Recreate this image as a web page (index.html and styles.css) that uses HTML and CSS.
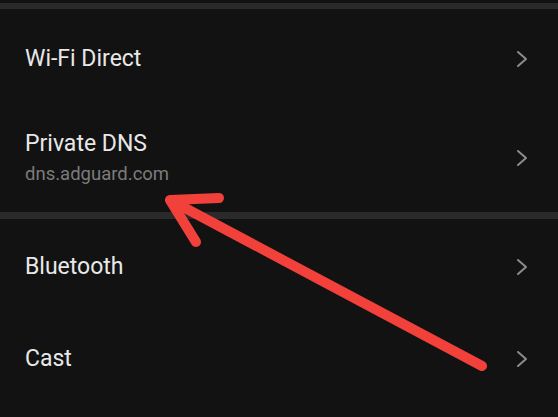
FILE: index.html
```html
<!DOCTYPE html>
<html>
<head>
<meta charset="utf-8">
<link rel="stylesheet" href="styles.css">
</head>
<body>
<div class="screen">
  <div class="top-gap"></div>
  <div class="divider"></div>
  <div class="row row-wifi">
    <div class="texts"><div class="title">Wi-Fi Direct</div></div>
    <svg class="chev" viewBox="0 0 12 18"><path d="M2 2 L10 9 L2 16"/></svg>
  </div>
  <div class="row row-double">
    <div class="texts">
      <div class="title">Private DNS</div>
      <div class="sub">dns.adguard.com</div>
    </div>
    <svg class="chev" viewBox="0 0 12 18"><path d="M2 2 L10 9 L2 16"/></svg>
  </div>
  <div class="divider divider-2"></div>
  <div class="row row-bt">
    <div class="texts"><div class="title">Bluetooth</div></div>
    <svg class="chev" viewBox="0 0 12 18"><path d="M2 2 L10 9 L2 16"/></svg>
  </div>
  <div class="row row-cast">
    <div class="texts"><div class="title">Cast</div></div>
    <svg class="chev" viewBox="0 0 12 18"><path d="M2 2 L10 9 L2 16"/></svg>
  </div>
  <svg class="arrow" viewBox="0 0 558 417">
    <path d="M482 366 L170 200 M170 200 L219 198 M170 200 L196 242"/>
  </svg>
</div>
</body>
</html>
```
FILE: styles.css
```css
* { box-sizing: border-box; margin: 0; padding: 0; }
html, body { width: 558px; height: 417px; overflow: hidden; background: #121212; }
body { font-family: Roboto, "Noto Sans", sans-serif; }
.screen { position: relative; width: 558px; height: 417px; background: #121212; }
.top-gap { height: 3px; }
.divider { height: 6px; background: #2a2a2a; }
.divider-2 { height: 7px; }
.row { display: flex; align-items: center; justify-content: space-between; padding: 0 30px 0 25px; }
.row-wifi { height: 99px; }
.row-double { height: 104px; padding-bottom: 4px; }
.row-bt { height: 96px; }
.row-cast { height: 88px; }
.title { color: #e8e8e8; font-size: 23px; line-height: 26px; }
.sub { color: #7c7c7c; font-size: 18.5px; line-height: 22px; margin-top: 6px; }
.chev { width: 12px; height: 18px; fill: none; stroke: #8c8c8c; stroke-width: 2; stroke-linecap: round; stroke-linejoin: round; }
.arrow { position: absolute; left: 0; top: 0; width: 558px; height: 417px; fill: none; stroke: #f2403a; stroke-width: 10; stroke-linecap: round; stroke-linejoin: round; }
```
